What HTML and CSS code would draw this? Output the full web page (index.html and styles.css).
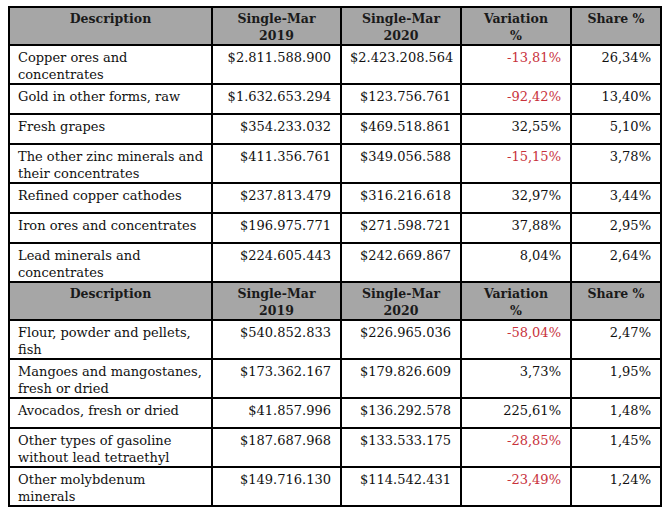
FILE: index.html
```html
<!DOCTYPE html>
<html>
<head>
<meta charset="utf-8">
<link rel="stylesheet" href="styles.css">
</head>
<body>
<table class="data">
  <colgroup>
    <col class="c-desc"><col class="c-m19"><col class="c-m20"><col class="c-var"><col class="c-share">
  </colgroup>
  <tbody>
    <tr class="head">
      <th>Description</th><th>Single-Mar<br>2019</th><th>Single-Mar<br>2020</th><th>Variation<br>%</th><th>Share %</th>
    </tr>
    <tr class="r2"><td class="desc">Copper ores and<br>concentrates</td><td>$2.811.588.900</td><td>$2.423.208.564</td><td class="neg">-13,81%</td><td>26,34%</td></tr>
    <tr class="r1"><td class="desc">Gold in other forms, raw</td><td>$1.632.653.294</td><td>$123.756.761</td><td class="neg">-92,42%</td><td>13,40%</td></tr>
    <tr class="r1"><td class="desc">Fresh grapes</td><td>$354.233.032</td><td>$469.518.861</td><td>32,55%</td><td>5,10%</td></tr>
    <tr class="r2"><td class="desc">The other zinc minerals and<br>their concentrates</td><td>$411.356.761</td><td>$349.056.588</td><td class="neg">-15,15%</td><td>3,78%</td></tr>
    <tr class="r1"><td class="desc">Refined copper cathodes</td><td>$237.813.479</td><td>$316.216.618</td><td>32,97%</td><td>3,44%</td></tr>
    <tr class="r1"><td class="desc">Iron ores and concentrates</td><td>$196.975.771</td><td>$271.598.721</td><td>37,88%</td><td>2,95%</td></tr>
    <tr class="r2"><td class="desc">Lead minerals and<br>concentrates</td><td>$224.605.443</td><td>$242.669.867</td><td>8,04%</td><td>2,64%</td></tr>
    <tr class="head">
      <th>Description</th><th>Single-Mar<br>2019</th><th>Single-Mar<br>2020</th><th>Variation<br>%</th><th>Share %</th>
    </tr>
    <tr class="r2"><td class="desc">Flour, powder and pellets,<br>fish</td><td>$540.852.833</td><td>$226.965.036</td><td class="neg">-58,04%</td><td>2,47%</td></tr>
    <tr class="r2"><td class="desc">Mangoes and mangostanes,<br>fresh or dried</td><td>$173.362.167</td><td>$179.826.609</td><td>3,73%</td><td>1,95%</td></tr>
    <tr class="r1"><td class="desc">Avocados, fresh or dried</td><td>$41.857.996</td><td>$136.292.578</td><td>225,61%</td><td>1,48%</td></tr>
    <tr class="r2"><td class="desc">Other types of gasoline<br>without lead tetraethyl</td><td>$187.687.968</td><td>$133.533.175</td><td class="neg">-28,85%</td><td>1,45%</td></tr>
    <tr class="r2"><td class="desc">Other molybdenum<br>minerals</td><td>$149.716.130</td><td>$114.542.431</td><td class="neg">-23,49%</td><td>1,24%</td></tr>
  </tbody>
</table>
</body>
</html>
```

FILE: styles.css
```css
html, body {
  margin: 0;
  padding: 0;
  background: #ffffff;
}

body {
  padding: 6px 0 0 8px;
  font-family: "DejaVu Serif", "Liberation Serif", serif;
  font-size: 13px;
  color: #111;
}

.data {
  border-collapse: collapse;
  table-layout: fixed;
  width: 652px;
}

.c-desc { width: 203px; }
.c-m19 { width: 129px; }
.c-m20 { width: 120px; }
.c-var { width: 110px; }
.c-share { width: 90px; }

.data th,
.data td {
  border: 2px solid #000;
  line-height: 17px;
  vertical-align: top;
  white-space: nowrap;
  overflow: hidden;
}

.data th {
  background: #a6a6a6;
  font-weight: bold;
  font-size: 12.5px;
  text-align: center;
  padding: 2px 4px 0;
  height: 34px;
  color: #1a1a1a;
}

.data td {
  text-align: right;
  padding: 3px 9px 0 8px;
}

.data td.desc {
  text-align: left;
}

.data td.neg {
  color: #c8323c;
}

.r1 td { height: 25px; }
.r2 td { height: 34px; }
```
